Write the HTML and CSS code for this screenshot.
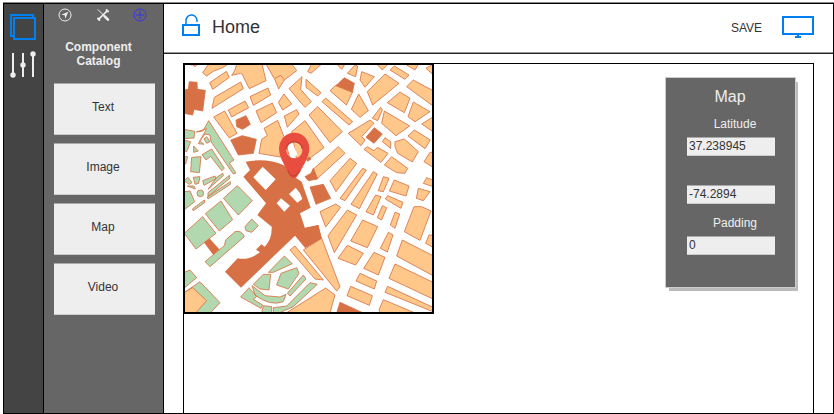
FILE: index.html
```
<!DOCTYPE html>
<html lang="en">
<head>
<meta charset="utf-8">
<meta name="viewport" content="width=device-width, initial-scale=1">
<title>Home</title>
<link rel="stylesheet" href="styles.css">
</head>
<body>
<div class="app">
  <nav class="rail">
    <button class="icon-button" aria-label="Pages">
      <svg width="28" height="28" viewBox="0 0 28 28" fill="none" stroke="#0080f0" stroke-width="2"><path d="M5 23H2V2h22v3"/><path d="M5 5h21v21H5z"/></svg>
    </button>
    <button class="icon-button" aria-label="Settings">
      <svg width="28" height="28" viewBox="0 0 28 28" stroke="#eee" stroke-width="2" fill="#eee"><path d="M4 2v23M14 2v24M24 2v24"/><g stroke="none"><circle cx="4" cy="24" r="2.7"/><circle cx="14" cy="14" r="2.7"/><circle cx="24" cy="3" r="2.7"/></g></svg>
    </button>
  </nav>
  <aside class="catalog">
    <div class="tools">
      <button class="icon-button" aria-label="Navigate"><svg width="14" height="14" viewBox="0 0 42 42" fill="none" stroke="#eee" stroke-width="3"><circle cx="21" cy="21" r="18"/><path d="M31 11 10 20l10 2 2 10z" fill="#eee" stroke="none"/></svg></button>
      <button class="icon-button" aria-label="Tools"><svg width="14" height="14" viewBox="0 0 42 42" fill="none" stroke="#eee"><path d="M5 4 37 36" stroke-width="3"/><path d="M26 25l10 10" stroke-width="8" stroke-linecap="round"/><path d="M7 35 33 9" stroke-width="5"/><path d="M32 3v7h7M3 32h7v7" stroke-width="5"/></svg></button>
      <button class="icon-button" aria-label="Add"><svg width="14" height="14" viewBox="0 0 42 42" fill="none" stroke="#3a32ee" stroke-width="3"><circle cx="21" cy="21" r="18"/><path d="M21 9v24M9 21h24"/></svg></button>
    </div>
    <h2 class="catalog-title">Component Catalog</h2>
    <div class="components">
      <button class="component">Text</button>
      <button class="component">Image</button>
      <button class="component">Map</button>
      <button class="component">Video</button>
    </div>
  </aside>
  <main class="main">
    <header class="header">
      <svg width="18" height="22" viewBox="0 0 18 22" fill="none" stroke="#0080f0" stroke-width="2"><path d="M1 11h16v10H1z"/><path d="M4 11V7a5.5 5.5 0 0 1 11-1v2" stroke-width="1.5"/></svg>
      <h1 class="page-title">Home</h1>
      <button class="save">SAVE</button>
      <button class="icon-button" aria-label="Preview"><svg width="32" height="22" viewBox="0 0 32 22" fill="none" stroke="#0080f0" stroke-width="2"><path d="M1 1h30v17H1z"/><path d="M16 18v2M13 21h6"/></svg></button>
    </header>
    <section class="canvas">
      <figure class="map">
        <svg viewBox="15 15 741 741" role="img" aria-label="Street map" fill="#ffc88a" stroke="#d77145" stroke-width="2.5">
          <g>
            <path d="M16 12H52L46 20 38 15zM68 38 86 12H145L130 22 100 34 80 48zM89 68 139 34 148 52 98 88zM96 145 103 112 182 66 190 86zM155 46 165 30 170 12H246L258 62 208 86 186 42 182 40zM258 12H335L350 32 313 60 296 87 285 60zM285 55 302 46 313 60M210 110 264 84 272 105 220 136zM145 150 195 123 206 143 155 171zM101 171 134 153 171 220 148 234zM228 153 277 129 290 158 243 188zM295 127 312 102 335 132 308 150zM313 168 350 149 357 162 322 202zM327 86 366 50 362 88 394 125 375 142zM378 58 423 98 413 108 378 82zM237 280 245 238 262 226 252 205 293 181 312 230 330 296zM335 215 375 182 432 263 388 296 350 300z"/>
            <path d="M328 252 337 248 353 285 340 292z" fill="#fff" stroke="none"/>
            <g fill="#d77145">
              <path d="M12 90 25 88 28 65 51 67 52 88 76 91 68 153 42 148 38 165 12 160zM168 180 198 167 211 193 188 208 170 200zM152 240 187 227 229 238 220 280 175 285z"/>
              <path stroke="none" d="M197 305 Q260 293 315 317L345 352 365 365 392 443 360 460 375 505 415 495 425 535 375 563 345 527 183 683 135 635 173 595Q205 602 240 577L228 569 244 553 254 560Q277 537 275 500L232 465 258 430 190 350 210 330z"/>
              <path stroke="none" d="M70 545 88 535 118 568 100 585z"/>
            </g>
            <path fill="#fff" stroke="none" d="M248 320 287 358 257 390 220 352zM290 430 303 415 330 437 313 455zM327 402 347 383 360 400 367 417 352 428z"/>
          </g>
          <g fill="#b1d8ae">
            <path d="M12 208 44 214 42 234 12 236zM49 216 69 213 86 182 155 290 162 300 148 309 168 339 160 342 93 245 90 225 75 222 60 242 72 253 55 251 80 206zM72 237 80 230 90 245 80 250zM66 284 95 267 133 325 125 332 92 289 78 300zM35 292 63 290 58 338 32 335zM41 258 55 273 41 277zM12 240 32 245 20 275 12 272zM12 290 23 290 17 312 12 312zM12 362 24 352 36 368 28 373zM40 352 60 350 56 370 45 373zM68 362 105 348 108 356 72 376zM110 352 129 340 130 347 84 388zM84 398 148 346 150 354 84 410zM82 411 151 365 151 373 84 417z"/>
            <circle cx="61" cy="400" r="10"/>
            <path d="M12 395 30 393 44 425 12 450zM37 447 73 420 75 427 40 452zM22 378H42L46 387zM130 415 172 377 217 422 175 465zM76 461 123 423 158 479 118 513zM13 520 68 470 108 520 48 567zM195 500 215 477 235 497 215 517 198 512zM75 605 133 557 137 540 165 515Q185 510 193 530L90 620zM12 637 30 630 50 653 12 685zM12 698 60 665 120 728 92 758H12zM265 637 313 588 337 611 280 637zM220 673 250 643 272 643 267 690 240 687zM290 675 303 640 350 623 357 640 325 687zM182 711 207 683 230 710 220 718 248 735 243 745zM216 677 255 707 300 711 318 703 310 725Q270 740 225 705zM322 700 370 645 378 657 330 708zM245 758 250 737 275 740V758zM280 758V743L320 738 390 668 412 673 340 740 300 758z"/>
          </g>
          <path d="M12 698 38 683 80 722 48 758H12zM330 570 345 558 430 660 405 657zM370 570 425 535 480 680 470 693zM320 758 437 684 465 705 450 758z"/>
          <g transform="translate(375 0)">
            <path d="M8 35 20 12H50L18 40zM95 12H120L110 28zM127 40 150 15 158 18 152 50zM170 35 208 50 180 82 165 60zM215 12H250L232 30zM255 30 268 18 312 45 300 58zM300 12H340L330 30zM363 25 384 12V44zM187 95 240 42 282 70 203 135zM305 80 325 60 384 92V138zM75 92 93 75 143 95 124 135zM51 125 62 114 143 185 132 195zM12 165 38 140 112 215 75 248zM139 148 161 102 190 152 165 172zM247 128 285 96 315 115 298 158zM309 170 325 126 375 155 330 185zM202 175 227 142 232 150 218 182zM230 190 238 153 314 198 273 227zM350 192 384 171V215zM309 228 328 210 376 240 360 266zM130 220 195 180 207 190 170 230 180 240 168 257zM177 268 187 260 207 272 217 262 249 280 228 307zM232 245 240 233 257 245 257 265zM270 260V245L298 237 340 275 322 306 278 280zM238 315 260 290 308 325 300 340 275 338zM357 305 375 277H384V322zM22 330 100 260 120 280 38 355zM75 362 135 295 155 310 93 395zM105 415 173 325 184 330 120 422zM138 433 205 335 217 342 163 446zM220 392 235 350 252 355 235 395zM253 393 268 360 312 378 303 408zM355 370 365 353 384 360V380z"/>
            <path fill="#d77145" d="M93 77 118 53 148 70 142 97zM183 232 208 203 232 222 207 250zM0 350 18 340 25 325 38 357 10 362zM5 300 12 290 18 297 8 304zM15 381 55 373 77 415 33 433z"/>
          </g>
          <g transform="translate(375 375)">
            <path d="M340 10 375 20 355 47 334 40zM241 42 248 32 294 52 288 70zM183 80 212 30 228 35 205 90zM217 98 232 62 245 68 230 105zM256 120 270 82 284 87 270 130zM298 140 327 65H350L378 78 345 166zM362 175 372 150H384V187zM45 80 92 57 107 67 62 126zM69 152 127 75 155 90 88 203zM137 168 173 105 218 125 187 188zM99 220 127 181 175 205 152 240zM226 190 250 142 264 150 247 201zM176 250 207 202 240 217 220 270zM275 213 292 165 384 212V272zM252 280 270 237 384 292V342zM153 288 165 265 215 288 208 312zM126 332 137 304 202 332 193 361zM240 322 248 304 384 367V380zM222 375 235 344 330 384H225z"/>
            <path fill="#d77145" stroke="none" d="M0 128 40 120 50 160 0 190z"/>
            <path fill="#d77145" d="M95 384 105 352 175 384z"/>
          </g>
          <path fill="#e94d40" stroke="none" fill-rule="evenodd" d="M343 218C369 218 389 240 388 267 387 292 367 322 352 349Q342 361 332 349C318 322 297 292 297 267 297 240 316 218 343 218zM343 247a24 24 0 1 0 .1 0z"/>
          <path fill="none" stroke="#cd4036" stroke-width="4" d="M319 267a24 22 0 0 1 48 0M323 330Q337 366 361 331"/>
        </svg>
      </figure>
      <form class="properties">
        <h2 class="properties-title">Map</h2>
        <label class="label" for="latitude">Latitude</label>
        <input class="field" id="latitude" type="text" value="37.238945">
        <input class="field field-spaced" type="text" aria-label="Longitude" value="-74.2894">
        <label class="label" for="padding">Padding</label>
        <input class="field" id="padding" type="text" value="0">
      </form>
    </section>
  </main>
</div>
</body>
</html>
```
FILE: styles.css
```
* { box-sizing: border-box; }

body {
  margin: 0;
  padding: 3px 0 0 3px;
  background: #fff;
  color: #333;
  font: 12px/14px "Liberation Sans", Arial, sans-serif;
}

h1, h2, figure { margin: 0; }

button {
  margin: 0;
  padding: 0;
  border: 0;
  background: none;
  color: inherit;
  font: inherit;
}

svg { display: block; }

.app {
  display: flex;
  min-height: calc(100vh - 3px);
  border: 1px solid #000;
  box-shadow: 0 -1px #888;
}

.rail {
  display: flex;
  flex-direction: column;
  align-items: center;
  gap: 10px;
  width: 40px;
  padding: 9px 2px 0 0;
  border-right: 1px solid #000;
  background: #444;
}

.catalog {
  width: 120px;
  padding: 4px 8px 0 10px;
  border-right: 1px solid #000;
  background: #666;
}

.tools {
  display: flex;
  justify-content: space-between;
  padding: 0 8px 0 4px;
}

.catalog-title {
  margin: 18px 16px 15px 4px;
  color: #eee;
  font-size: 12px;
  line-height: 14px;
  text-align: center;
}

.components {
  display: grid;
  gap: 8px;
}

.component {
  height: 52px;
  padding: 0 3px 4px 0;
  border-top: 1px solid #aaa;
  border-bottom: 1px solid #ccc;
  background: #eee;
}

.main {
  display: flex;
  flex: 1;
  flex-direction: column;
  min-width: 0;
}

.header {
  display: flex;
  align-items: center;
  height: 50px;
  padding: 0 19px 3px 18px;
  border-bottom: 1px solid #222;
  box-shadow: inset 0 -1px #999;
}

.header > svg { margin-bottom: 4px; }

.page-title {
  margin: 0 auto 0 12px;
  font-size: 18px;
  font-weight: 400;
  line-height: 22px;
}

.save {
  margin-right: 20px;
  padding-top: 2px;
}

.canvas {
  display: flex;
  flex: 1;
  align-items: flex-start;
  justify-content: space-between;
  margin: 9px 19px 0;
  border: 1px solid #000;
  border-bottom: 0;
}

.map {
  width: 251px;
  margin: -1px 0 0 -1px;
  border: 2px solid #000;
}

.properties {
  width: 129px;
  margin: 14px 18px 0 0;
  padding: 10px 20px 32px 21px;
  background: #666;
  box-shadow: 0 0 0 1px #ccc, 3px 4px #bbb;
  color: #eee;
}

.properties-title {
  padding-right: 2px;
  font-size: 16px;
  font-weight: 400;
  line-height: 18px;
  text-align: center;
}

.label {
  display: block;
  margin: 11px 0 6px;
  padding-left: 8px;
  text-align: center;
}

.field + .label { margin-top: 12px; }

.field {
  display: block;
  width: 100%;
  height: 19px;
  padding: 0 2px 2px;
  border: 0;
  border-top: 1px solid #aaa;
  border-bottom: 1px solid #ccc;
  border-radius: 0;
  background: #eee;
  color: #333;
  font: inherit;
}

.field-spaced { margin-top: 29px; }
```
